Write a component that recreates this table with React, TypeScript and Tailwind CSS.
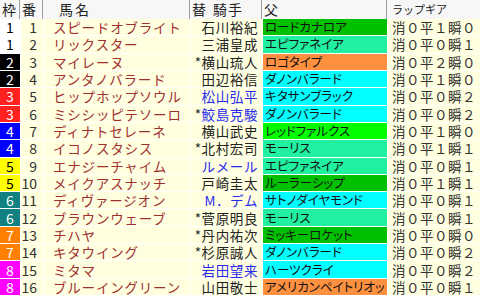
const waku: Record<number, string> = {
  1: "bg-white text-black",
  2: "bg-black text-white",
  3: "bg-[#ff2020] text-white",
  4: "bg-[#0000ff] text-white",
  5: "bg-[#ffff00] text-black",
  6: "bg-[#108080] text-white",
  7: "bg-[#ff8000] text-white",
  8: "bg-[#ff00ff] text-white",
};

const sire: Record<string, string> = {
  green: "bg-[#00c000]",
  lime: "bg-[#00ff00]",
  mint: "bg-[#20f0a0]",
  cyan: "bg-[#00ffff]",
  orange: "bg-[#ff9040]",
};

const rows = [
  { w: 1, no: 1, name: "スピードオブライト", mark: "", jockey: "石川裕紀", blue: false, sire: "ロードカナロア", sc: "green", gear: "消０平１瞬０" },
  { w: 1, no: 2, name: "リックスター", mark: "", jockey: "三浦皇成", blue: false, sire: "エピファネイア", sc: "mint", gear: "消０平０瞬１" },
  { w: 2, no: 3, name: "マイレーヌ", mark: "*", jockey: "横山琉人", blue: false, sire: "ロゴタイプ", sc: "orange", gear: "消０平２瞬０" },
  { w: 2, no: 4, name: "アンタノバラード", mark: "", jockey: "田辺裕信", blue: false, sire: "ダノンバラード", sc: "cyan", gear: "消０平１瞬０" },
  { w: 3, no: 5, name: "ヒップホップソウル", mark: "", jockey: "松山弘平", blue: true, sire: "キタサンブラック", sc: "cyan", gear: "消０平０瞬２" },
  { w: 3, no: 6, name: "ミシシッピテソーロ", mark: "*", jockey: "鮫島克駿", blue: true, sire: "ダノンバラード", sc: "cyan", gear: "消０平０瞬２" },
  { w: 4, no: 7, name: "ディナトセレーネ", mark: "", jockey: "横山武史", blue: false, sire: "レッドファルクス", sc: "lime", gear: "消０平１瞬０" },
  { w: 4, no: 8, name: "イコノスタシス", mark: "*", jockey: "北村宏司", blue: false, sire: "モーリス", sc: "mint", gear: "消０平１瞬１" },
  { w: 5, no: 9, name: "エナジーチャイム", mark: "", jockey: "ルメール", blue: true, sire: "エピファネイア", sc: "mint", gear: "消０平０瞬１" },
  { w: 5, no: 10, name: "メイクアスナッチ", mark: "", jockey: "戸崎圭太", blue: false, sire: "ルーラーシップ", sc: "green", gear: "消０平１瞬１" },
  { w: 6, no: 11, name: "ディヴァージオン", mark: "", jockey: "M．デム", blue: true, sire: "サトノダイヤモンド", sc: "cyan", gear: "消０平０瞬１" },
  { w: 6, no: 12, name: "ブラウンウェーブ", mark: "*", jockey: "菅原明良", blue: false, sire: "モーリス", sc: "mint", gear: "消０平０瞬１" },
  { w: 7, no: 13, name: "チハヤ", mark: "*", jockey: "丹内祐次", blue: false, sire: "ミッキーロケット", sc: "green", gear: "消０平０瞬０" },
  { w: 7, no: 14, name: "キタウイング", mark: "*", jockey: "杉原誠人", blue: false, sire: "ダノンバラード", sc: "cyan", gear: "消０平０瞬２" },
  { w: 8, no: 15, name: "ミタマ", mark: "", jockey: "岩田望来", blue: true, sire: "ハーツクライ", sc: "cyan", gear: "消０平０瞬２" },
  { w: 8, no: 16, name: "ブルーイングリーン", mark: "", jockey: "山田敬士", blue: false, sire: "アメリカンペイトリオット", sc: "orange", gear: "消０平０瞬１" },
];

const font = { fontFamily: "'Noto Sans CJK JP', sans-serif" };

export default function App() {
  return (
    <div className="w-[480px] h-[295px] overflow-hidden bg-white text-[#222]" style={font}>
      {/* header */}
      <div className="flex h-[19px] bg-[#f7f7f7] text-[14px] leading-[19px] text-[#222]">
        <div className="w-[20px] pl-[2px] border-r border-[#a0a0a0]">枠</div>
        <div className="w-[23px] pl-[2px] border-r border-[#a0a0a0]">番</div>
        <div className="w-[147px] pl-[16px] tracking-[2px] border-r border-[#a0a0a0]">馬名</div>
        <div className="w-[72px] pl-[2px] border-r border-[#a0a0a0]">
          替<span className="ml-[7px] tracking-[1px]">騎手</span>
        </div>
        <div className="w-[125px] pl-[2px] border-r border-[#a0a0a0]">父</div>
        <div className="flex-1 pl-[5px] text-[11px]">ラップギア</div>
      </div>

      {/* body */}
      <div className="grid h-[276px] grid-cols-[20px_22px_146px_71px_124px_92px] grid-rows-[repeat(16,minmax(0,1fr))] gap-px bg-white leading-[16px]">
        {rows.map((r) => (
          <div key={r.no} className="contents">
            <div className={`flex items-center justify-center text-[14px] ${waku[r.w]}`}>{r.w}</div>
            <div className="flex items-center justify-end pr-[6px] text-[14px] bg-[#ffffe0] text-[#333]">{r.no}</div>
            <div className="flex items-center pl-[9px] text-[13.5px] tracking-[0.8px] whitespace-nowrap overflow-hidden bg-[#ffffe0] text-[#a03030]">
              {r.name}
            </div>
            <div className="flex items-center justify-end pr-[4px] text-[13.5px] tracking-[0.6px] whitespace-nowrap bg-[#ffffe0]">
              {r.mark && <span className="text-[#222]">*</span>}
              <span className={r.blue ? "text-[#2a2aee]" : "text-[#222]"}>{r.jockey}</span>
            </div>
            <div
              className={`flex items-center pl-[2px] text-[12.5px] whitespace-nowrap overflow-hidden text-[#111] ${sire[r.sc]}`}
              style={{ fontFeatureSettings: "'palt'" }}
            >
              {r.sire}
            </div>
            <div className="flex items-center pl-[4px] text-[13.5px] tracking-[0.5px] whitespace-nowrap bg-[#ffffe0] text-[#333]">
              {r.gear}
            </div>
          </div>
        ))}
      </div>
    </div>
  );
}
